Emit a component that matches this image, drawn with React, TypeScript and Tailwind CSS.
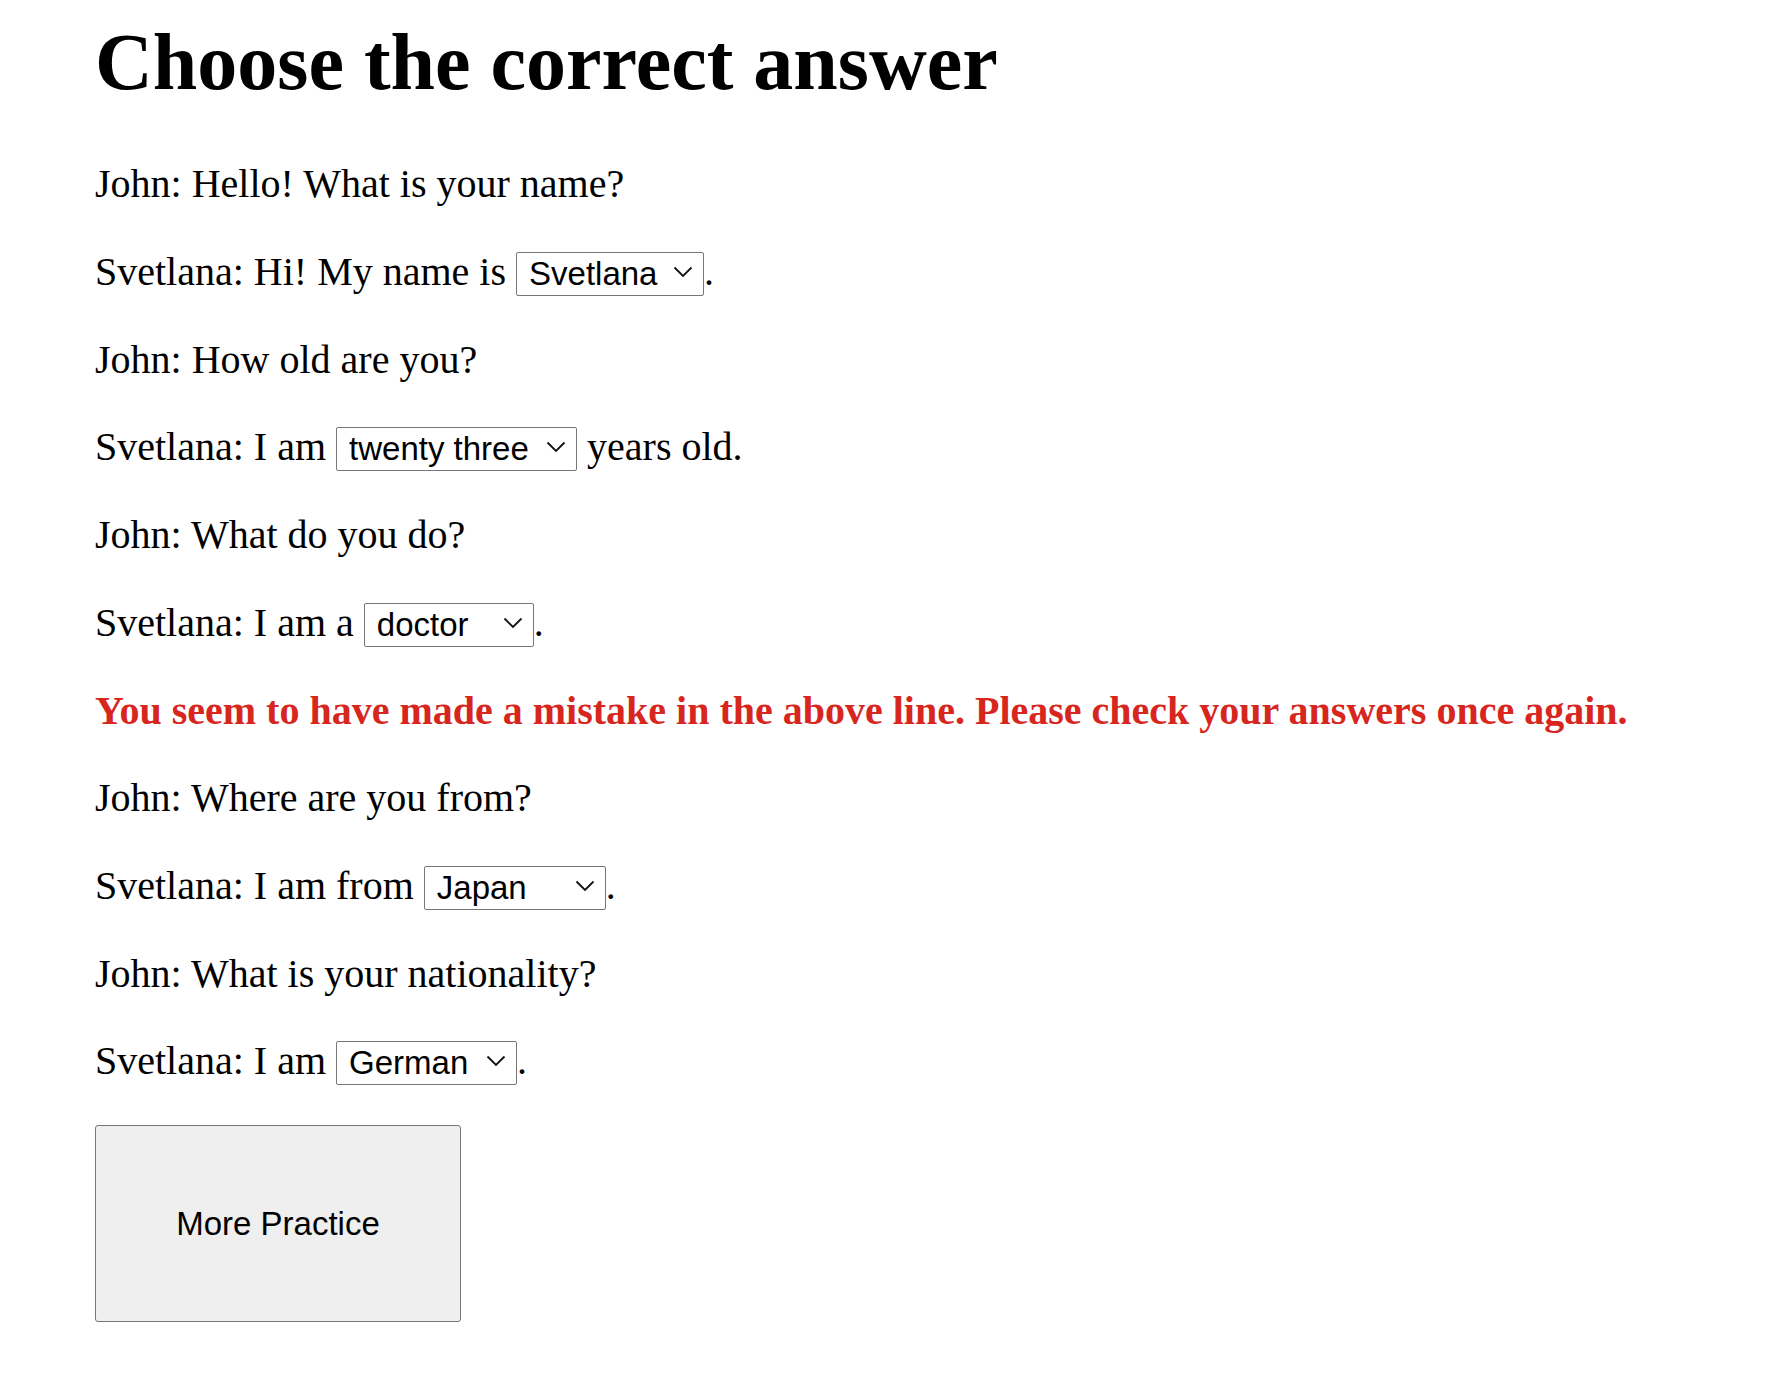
import { useState } from "react";

type Blank = {
  options: string[];
  initial: string;
  width: string;
};

function Chevron() {
  return (
    <svg
      className="pointer-events-none absolute right-[11px] top-1/2 -translate-y-1/2"
      width="20"
      height="12"
      viewBox="0 0 20 12"
      fill="none"
    >
      <path d="M1.5 1.5 L10 10 L18.5 1.5" stroke="#111" strokeWidth="1.8" />
    </svg>
  );
}

function Pick({ options, initial, width }: Blank) {
  const [value, setValue] = useState(initial);
  return (
    <span className="relative inline-block align-baseline">
      <select
        value={value}
        onChange={(e) => setValue(e.target.value)}
        className={`${width} appearance-none rounded-[2px] border border-[#767676] bg-white py-[3px] pl-[12px] pr-[36px] font-['Liberation_Sans',Arial,sans-serif] text-[33px] leading-[36px] text-black outline-none`}
      >
        {options.map((o) => (
          <option key={o} value={o}>
            {o}
          </option>
        ))}
      </select>
      <Chevron />
    </span>
  );
}

export default function App() {
  return (
    <div className="min-h-[1389px] bg-white pl-[95px] pt-[16px] font-['Liberation_Serif','Times_New_Roman',serif] text-[40px] leading-[47.5px] text-black">
      <h1 className="mb-[52px] text-[80px] font-bold leading-[92px]">Choose the correct answer</h1>

      <p className="my-10">John: Hello! What is your name?</p>
      <p className="my-10">
        Svetlana: Hi! My name is{" "}
        <Pick options={["Svetlana", "John", "Anna"]} initial="Svetlana" width="w-[188px]" />.
      </p>

      <p className="my-10">John: How old are you?</p>
      <p className="my-10">
        Svetlana: I am{" "}
        <Pick options={["twenty three", "twenty", "thirty"]} initial="twenty three" width="w-[241px]" />{" "}
        years old.
      </p>

      <p className="my-10">John: What do you do?</p>
      <p className="my-10">
        Svetlana: I am a{" "}
        <Pick options={["doctor", "teacher", "student"]} initial="doctor" width="w-[170px]" />.
      </p>

      <p className="my-10 font-bold text-[#d7261e]">
        You seem to have made a mistake in the above line. Please check your answers once again.
      </p>

      <p className="my-10">John: Where are you from?</p>
      <p className="my-10">
        Svetlana: I am from{" "}
        <Pick options={["Japan", "Russia", "Germany"]} initial="Japan" width="w-[182px]" />.
      </p>

      <p className="my-10">John: What is your nationality?</p>
      <p className="my-10">
        Svetlana: I am{" "}
        <Pick options={["German", "Russian", "Japanese"]} initial="German" width="w-[181px]" />.
      </p>

      <button className="h-[197px] w-[366px] rounded-[3px] border border-[#767676] bg-[#efefef] font-['Liberation_Sans',Arial,sans-serif] text-[33px] leading-[38px] text-black">
        More Practice
      </button>
    </div>
  );
}
